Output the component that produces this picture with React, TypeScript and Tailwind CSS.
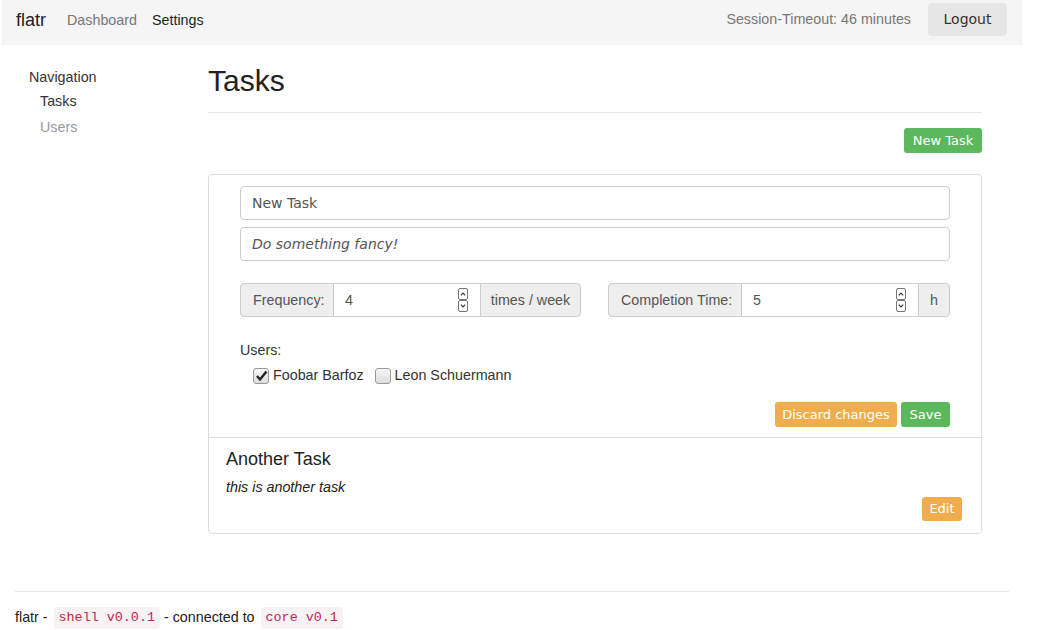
import React from "react";

function Spinner() {
  return (
    <div className="flex flex-col">
      <div className="w-[10px] h-[12px] border border-[#767676] rounded-[2px] flex items-center justify-center bg-white">
        <svg width="6" height="4" viewBox="0 0 6 4"><path d="M0.8 3.3 L3 1 L5.2 3.3" fill="none" stroke="#333" strokeWidth="1.1" /></svg>
      </div>
      <div className="w-[10px] h-[12px] border border-[#767676] rounded-[2px] flex items-center justify-center bg-white">
        <svg width="6" height="4" viewBox="0 0 6 4"><path d="M0.8 0.7 L3 3 L5.2 0.7" fill="none" stroke="#333" strokeWidth="1.1" /></svg>
      </div>
    </div>
  );
}

function Checkbox({ checked }: { checked: boolean }) {
  return (
    <span className="w-[16px] h-[16px] rounded-[3px] border border-[#999] bg-gradient-to-b from-[#f6f6f6] to-[#dedede] flex items-center justify-center">
      {checked && (
        <svg width="13" height="12" viewBox="0 0 13 12">
          <path d="M2 6 L5 9.5 L11.5 1.5" fill="none" stroke="#222" strokeWidth="2.4" />
        </svg>
      )}
    </span>
  );
}

function NumberGroup({ label, value, unit, labelW, unitW, width }: { label: string; value: string; unit: string; labelW: string; unitW: string; width: string }) {
  return (
    <div className={`flex h-[34px] ${width}`}>
      <div className={`${labelW} shrink-0 whitespace-nowrap flex items-center pt-[1px] px-[12px] bg-[#eee] border border-[#ccc] rounded-l-[4px] text-[#555]`}>{label}</div>
      <div className="flex-1 flex items-center justify-between pl-[11px] pr-[12px] border-y border-[#ccc] bg-white text-[#555]">
        <span className="pt-[1px]">{value}</span>
        <Spinner />
      </div>
      <div className={`${unitW} shrink-0 whitespace-nowrap flex items-center justify-center pt-[1px] bg-[#eee] border border-[#ccc] rounded-r-[4px] text-[#555]`}>{unit}</div>
    </div>
  );
}

export default function App() {
  return (
    <div className="w-[1044px] h-[630px] bg-white text-[#333] font-['Liberation_Sans',Arial,sans-serif] text-[14.3px] overflow-hidden">
      {/* Navbar */}
      <div className="ml-[2px] w-[1020px] h-[45px] bg-[#f5f5f5]">
        <div className="h-[39px] flex items-center pl-[14px] pr-[15px]">
          <span className="text-[18px] text-[#222] mt-[1px]">flatr</span>
          <span className="ml-[21px] text-[#777] mt-[2px]">Dashboard</span>
          <span className="ml-[15px] text-[#222] mt-[2px]">Settings</span>
          <span className="ml-auto text-[#777]">Session-Timeout: 46 minutes</span>
          <button className="ml-[17px] w-[79px] h-[33px] rounded-[4px] bg-[#e6e6e6] text-[#333] text-[14px] font-['DejaVu_Sans',sans-serif]">Logout</button>
        </div>
      </div>

      <div className="flex">
        {/* Sidebar */}
        <div className="w-[208px] pl-[29px] pt-[22px]">
          <div className="leading-[20px] text-[#333]">Navigation</div>
          <div className="leading-[20px] mt-[4px] pl-[11px] text-[#333]">Tasks</div>
          <div className="leading-[20px] mt-[6px] pl-[11px] text-[#999]">Users</div>
        </div>

        {/* Main */}
        <div className="w-[774px]">
          <h1 className="mt-[19px] text-[30px] leading-[34px] text-[#222]">Tasks</h1>
          <div className="mt-[14px] border-t border-[#e5e5e5]" />
          <div className="mt-[15px] flex justify-end">
            <button className="h-[25px] w-[78px] rounded-[3px] bg-[#5cb85c] text-white text-[13px] font-['DejaVu_Sans',sans-serif]">New Task</button>
          </div>

          <div className="mt-[21px] border border-[#ddd] rounded-[4px]">
            <div className="px-[31px] pt-[11px] pb-[10px]">
              <div className="h-[34px] border border-[#ccc] rounded-[4px] flex items-center px-[11px] text-[14px] text-[#555] font-['DejaVu_Sans',sans-serif]">New Task</div>
              <div className="mt-[7px] h-[34px] border border-[#ccc] rounded-[4px] flex items-center px-[11px] text-[14px] text-[#555] italic font-['DejaVu_Sans',sans-serif]">Do something fancy!</div>
              <div className="mt-[22px] flex gap-[27px]">
                <NumberGroup label="Frequency:" value="4" unit="times / week" labelW="w-[94px]" unitW="w-[101px]" width="w-[341px]" />
                <NumberGroup label="Completion Time:" value="5" unit="h" labelW="w-[134px]" unitW="w-[32px]" width="w-[342px]" />
              </div>
              <div className="mt-[23px] leading-[20px]">Users:</div>
              <div className="mt-[6px] h-[20px] flex items-center pl-[13px]">
                <Checkbox checked />
                <span className="ml-[4px]">Foobar Barfoz</span>
                <span className="ml-[11px]"><Checkbox checked={false} /></span>
                <span className="ml-[4px]">Leon Schuermann</span>
              </div>
              <div className="mt-[16px] flex justify-end gap-[4px]">
                <button className="h-[25px] w-[122px] rounded-[3px] bg-[#f0ad4e] text-white text-[13px] font-['DejaVu_Sans',sans-serif]">Discard changes</button>
                <button className="h-[25px] w-[49px] rounded-[3px] bg-[#5cb85c] text-white text-[13px] font-['DejaVu_Sans',sans-serif]">Save</button>
              </div>
            </div>
            <div className="border-t border-[#ddd] pl-[17px] pr-[19px] pt-[9px] pb-[12px]">
              <div className="text-[18px] leading-[24px] text-[#222]">Another Task</div>
              <div className="mt-[6px] leading-[20px] italic text-[#222]">this is another task</div>
              <div className="flex justify-end">
                <button className="h-[24px] w-[40px] rounded-[3px] bg-[#f0ad4e] text-white text-[13px] font-['DejaVu_Sans',sans-serif]">Edit</button>
              </div>
            </div>
          </div>
        </div>
      </div>

      {/* Footer */}
      <div className="ml-[15px] w-[994px] mt-[57px] border-t border-[#e5e5e5]" />
      <div className="ml-[15px] mt-[16px] h-[20px] flex items-center text-[#222]">
        <span>flatr -&nbsp;</span>
        <code className="ml-[2px] px-[5px] py-[1px] rounded-[4px] bg-[#f9f2f4] text-[#c7254e] text-[13.4px] font-['Liberation_Mono',monospace]">shell v0.0.1</code>
        <span>&nbsp;- connected to&nbsp;</span>
        <code className="ml-[2px] px-[5px] py-[1px] rounded-[4px] bg-[#f9f2f4] text-[#c7254e] text-[13.4px] font-['Liberation_Mono',monospace]">core v0.1</code>
      </div>
    </div>
  );
}
